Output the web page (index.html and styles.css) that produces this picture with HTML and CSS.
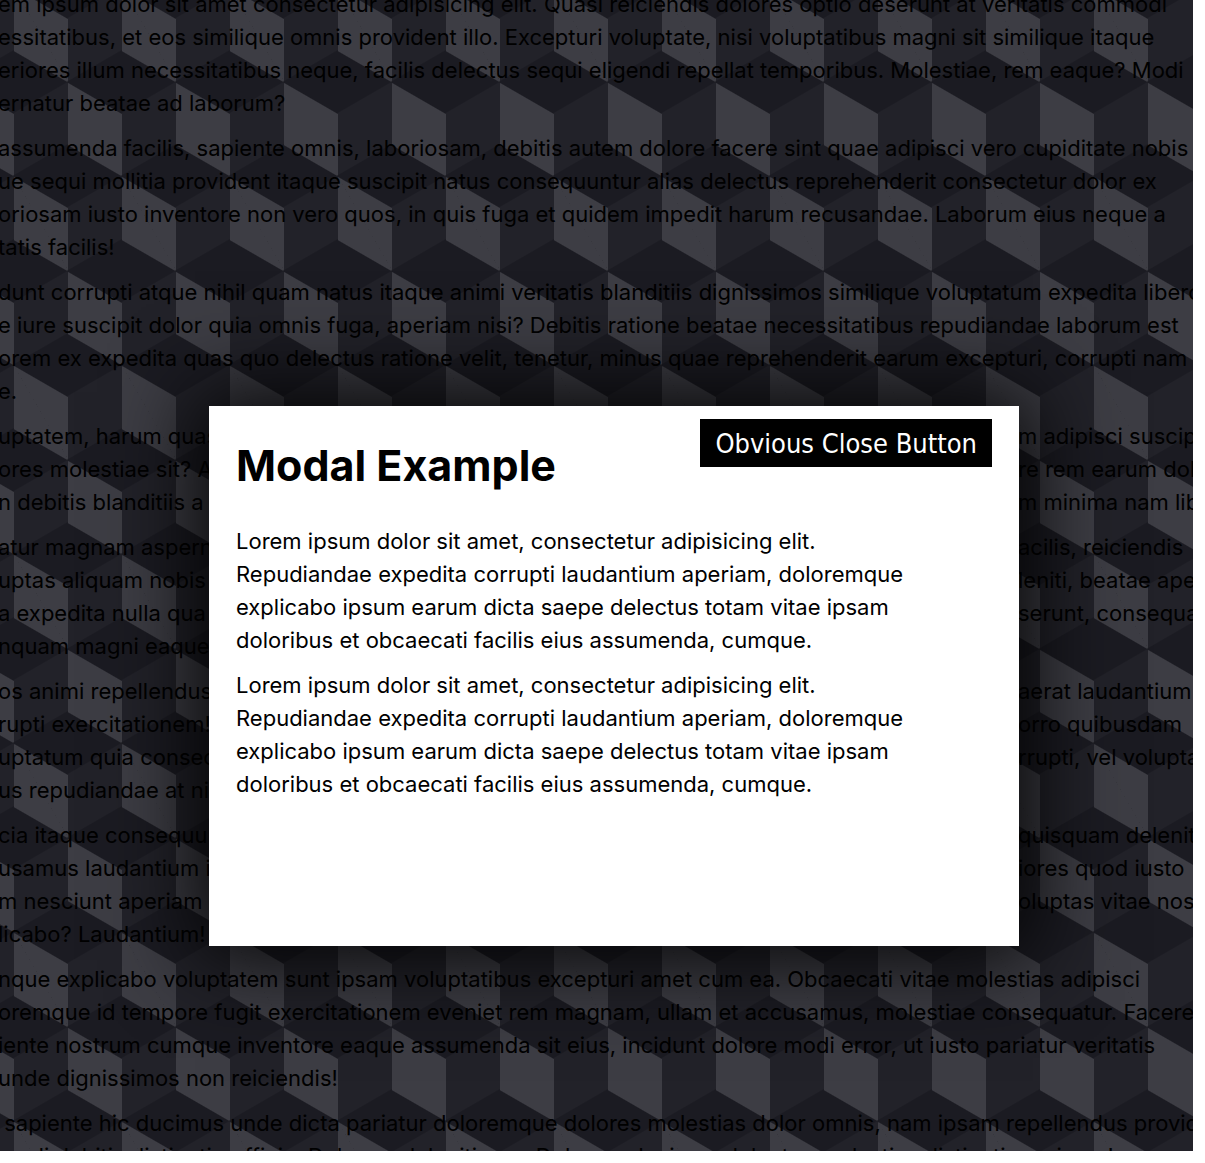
FILE: index.html
```html
<!DOCTYPE html>
<html lang="en">
<head>
  <meta charset="utf-8">
  <title>Modal Example</title>
  <link rel="stylesheet" href="styles.css">
</head>
<body>
  <div class="stage">
    <main class="page-text">
      <p>em ipsum dolor sit amet consectetur adipisicing elit. Quasi reiciendis dolores optio deserunt at veritatis commodi<br>
        essitatibus, et eos similique omnis provident illo. Excepturi voluptate, nisi voluptatibus magni sit similique itaque<br>
        eriores illum necessitatibus neque, facilis delectus sequi eligendi repellat temporibus. Molestiae, rem eaque? Modi<br>
        ernatur beatae ad laborum?</p>
      <p>assumenda facilis, sapiente omnis, laboriosam, debitis autem dolore facere sint quae adipisci vero cupiditate nobis<br>
        ue sequi mollitia provident itaque suscipit natus consequuntur alias delectus reprehenderit consectetur dolor ex<br>
        oriosam iusto inventore non vero quos, in quis fuga et quidem impedit harum recusandae. Laborum eius neque a<br>
        tatis facilis!</p>
      <p>dunt corrupti atque nihil quam natus itaque animi veritatis blanditiis dignissimos similique voluptatum expedita libero<br>
        e iure suscipit dolor quia omnis fuga, aperiam nisi? Debitis ratione beatae necessitatibus repudiandae laborum est<br>
        orem ex expedita quas quo delectus ratione velit, tenetur, minus quae reprehenderit earum excepturi, corrupti nam<br>
        e.</p>
      <p><span class="line"><span>uptatem, harum quas</span><span>m adipisci suscipit</span></span>
        <span class="line"><span>ores molestiae sit? A</span><span>re rem earum dolor</span></span>
        <span class="line"><span>n debitis blanditiis a</span><span>m minima nam libero</span></span></p>
      <p><span class="line"><span>atur magnam aspern</span><span>acilis, reiciendis</span></span>
        <span class="line"><span>uptas aliquam nobis</span><span>leniti, beatae aperiam</span></span>
        <span class="line"><span>a expedita nulla qua</span><span>serunt, consequatur</span></span>
        <span class="line"><span>nquam magni eaque</span></span></p>
      <p><span class="line"><span>os animi repellendus</span><span>aerat laudantium</span></span>
        <span class="line"><span>rupti exercitationem!</span><span>orro quibusdam</span></span>
        <span class="line"><span>uptatum quia consec</span><span>rrupti, vel voluptas</span></span>
        <span class="line"><span>us repudiandae at ni</span></span></p>
      <p><span class="line"><span>cia itaque consequu</span><span>quisquam deleniti</span></span>
        <span class="line"><span>usamus laudantium i</span><span>iores quod iusto</span></span>
        <span class="line"><span>m nesciunt aperiam e</span><span>oluptas vitae nostrum</span></span>
        <span class="line"><span>licabo? Laudantium!</span></span></p>
      <p>nque explicabo voluptatem sunt ipsam voluptatibus excepturi amet cum ea. Obcaecati vitae molestias adipisci<br>
        oremque id tempore fugit exercitationem eveniet rem magnam, ullam et accusamus, molestiae consequatur. Facere<br>
        iente nostrum cumque inventore eaque assumenda sit eius, incidunt dolore modi error, ut iusto pariatur veritatis<br>
        unde dignissimos non reiciendis!</p>
      <p>&nbsp;sapiente hic ducimus unde dicta pariatur doloremque dolores molestias dolor omnis, nam ipsam repellendus provident<br>
        modi debitis distinctio officia. Dolorem deleniti rem. Dolorum ducimus delectus molestias distinctio maiores!</p>
    </main>

    <div class="overlay"></div>

    <section class="modal" role="dialog" aria-labelledby="modal-title">
      <button class="close-button" type="button">Obvious Close Button</button>
      <div class="modal-guts">
        <h1 id="modal-title">Modal Example</h1>
        <p>Lorem ipsum dolor sit amet, consectetur adipisicing elit.<br>
          Repudiandae expedita corrupti laudantium aperiam, doloremque<br>
          explicabo ipsum earum dicta saepe delectus totam vitae ipsam<br>
          doloribus et obcaecati facilis eius assumenda, cumque.</p>
        <p>Lorem ipsum dolor sit amet, consectetur adipisicing elit.<br>
          Repudiandae expedita corrupti laudantium aperiam, doloremque<br>
          explicabo ipsum earum dicta saepe delectus totam vitae ipsam<br>
          doloribus et obcaecati facilis eius assumenda, cumque.</p>
      </div>
    </section>
  </div>
</body>
</html>
```
FILE: styles.css
```css
* {
  box-sizing: border-box;
}

body {
  margin: 0;
  padding: 0 12px 12px 0;
  background: #fff;
  color: #000;
  font: 22px/33px Inter, "Open Sans", sans-serif;
}

p {
  margin: 0 0 12px;
}

/* Isometric cube pattern made of layered gradients */
.stage {
  position: relative;
  height: calc(100vh - 12px);
  overflow: hidden;
  background-color: #556;
  background-image:
    linear-gradient(30deg, #445 12%, transparent 12.5%, transparent 87%, #445 87.5%, #445),
    linear-gradient(150deg, #445 12%, transparent 12.5%, transparent 87%, #445 87.5%, #445),
    linear-gradient(30deg, #445 12%, transparent 12.5%, transparent 87%, #445 87.5%, #445),
    linear-gradient(150deg, #445 12%, transparent 12.5%, transparent 87%, #445 87.5%, #445),
    linear-gradient(60deg, #99a 25%, transparent 25.5%, transparent 75%, #99a 75%, #99a),
    linear-gradient(60deg, #99a 25%, transparent 25.5%, transparent 75%, #99a 75%, #99a);
  background-size: 108px 189px;
  background-position: 14px 82px, 14px 82px, 68px 176px, 68px 176px, 14px 82px, 68px 176px;
}

.page-text {
  margin: -12px 0 0 -2px;
  white-space: nowrap;
}

.line {
  display: grid;
  grid-template-columns: 1020px 1fr;
}

.overlay {
  position: absolute;
  inset: 0;
  background: rgba(0, 0, 0, 0.6);
}

.modal {
  position: absolute;
  top: 406px;
  left: 209px;
  width: 810px;
  height: 540px;
  background: #fff;
  box-shadow: 0 0 81px 14px rgba(0, 0, 0, 0.9);
}

.modal-guts {
  height: 100%;
  padding: 27px;
  overflow: hidden;
}

.modal-guts h1 {
  margin: 0 0 28px;
  font-size: 43px;
  font-weight: 700;
  line-height: 64px;
}

.close-button {
  position: absolute;
  top: 13px;
  right: 27px;
  padding: 9px 15px 7px;
  border: 0;
  background: #000;
  color: #fff;
  font: 27px/32px "DejaVu Sans Condensed", "DejaVu Sans", sans-serif;
  cursor: pointer;
}
```
